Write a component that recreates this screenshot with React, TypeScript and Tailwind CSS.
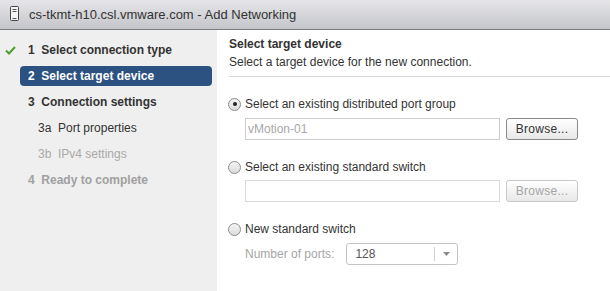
export default function App() {
  const steps = [
    { label: "1  Select connection type", state: "done", indent: false },
    { label: "2  Select target device", state: "active", indent: false },
    { label: "3  Connection settings", state: "normal", indent: false },
    { label: "3a  Port properties", state: "sub", indent: true },
    { label: "3b  IPv4 settings", state: "subDisabled", indent: true },
    { label: "4  Ready to complete", state: "disabled", indent: false },
  ];

  const font = { fontFamily: '"Liberation Sans", Arial, sans-serif' };

  return (
    <div className="w-[610px] h-[291px] overflow-hidden bg-white text-[12px] text-[#333]" style={font}>
      {/* Title bar */}
      <div className="h-[30px] flex items-center gap-[10px] pl-[10px] bg-gradient-to-b from-[#e6e6e9] to-[#c4c5ca] border-b border-[#7c7c7c]">
        <svg width="9" height="16" viewBox="0 0 9 16" className="mb-[1px]">
          <rect x="0.5" y="0.5" width="8" height="14" rx="1" fill="#f4f4f4" stroke="#444" />
          <line x1="2.5" y1="3.5" x2="6.5" y2="3.5" stroke="#555" />
          <line x1="2.5" y1="5.5" x2="6.5" y2="5.5" stroke="#555" />
          <line x1="2.5" y1="12.5" x2="6.5" y2="12.5" stroke="#555" />
        </svg>
        <span className="text-[13px] text-[#333] leading-none">cs-tkmt-h10.csl.vmware.com - Add Networking</span>
      </div>

      <div className="flex h-[261px]">
        {/* Left nav */}
        <div className="w-[217px] bg-[#efefef] pt-[10px] flex flex-col gap-[6px]">
          {steps.map((s, i) => (
            <div key={i} className="flex items-center h-[20px]">
              <div className="w-[20px] flex justify-center pl-[1px]">
                {s.state === "done" && (
                  <svg width="11" height="9" viewBox="0 0 11 9">
                    <path d="M1 4.5 L4 7.5 L10 1" stroke="#4e9d2d" strokeWidth="2" fill="none" />
                  </svg>
                )}
              </div>
              <div
                className={
                  "w-[192px] h-[20px] flex items-center rounded-[4px] whitespace-pre leading-none " +
                  (s.indent ? "pl-[18px] " : "pl-[8px] ") +
                  (s.state === "active"
                    ? "bg-[#2c5281] text-white font-bold"
                    : s.state === "done" || s.state === "normal"
                    ? "text-[#333] font-bold"
                    : s.state === "sub"
                    ? "text-[#333]"
                    : s.state === "subDisabled"
                    ? "text-[#a9a9a9]"
                    : "text-[#a0a0a0] font-bold")
                }
              >
                {s.label}
              </div>
            </div>
          ))}
        </div>

        {/* Right content */}
        <div className="flex-1 pl-[12px] pt-[7px]">
          <div className="font-bold leading-[14px]">Select target device</div>
          <div className="leading-[14px] mt-[4px]">Select a target device for the new connection.</div>
          <div className="h-px bg-[#d6d6d6] mt-[7px]" />

          <div className="flex flex-col mt-[20px]">
            <Radio checked label="Select an existing distributed port group" />
            <div className="flex gap-[6px] ml-[16px] mt-[7px]">
              <div className="w-[255px] h-[22px] border border-[#cccccc] flex items-center pl-[2px] text-[#a8a8a8]">
                vMotion-01
              </div>
              <Button label="Browse..." />
            </div>

            <div className="mt-[20px]">
              <Radio label="Select an existing standard switch" />
            </div>
            <div className="flex gap-[6px] ml-[16px] mt-[6px]">
              <div className="w-[255px] h-[22px] border border-[#dadada]" />
              <Button label="Browse..." disabled />
            </div>

            <div className="mt-[20px]">
              <Radio label="New standard switch" />
            </div>
            <div className="flex items-center ml-[16px] mt-[7px] gap-[12px]">
              <span className="text-[#a6a6a6]">Number of ports:</span>
              <div className="w-[112px] h-[22px] border border-[#c4c4c4] rounded-[3px] flex items-center">
                <span className="flex-1 pl-[8px] text-[#555]">128</span>
                <div className="w-px h-[14px] bg-[#d0d0d0]" />
                <div className="w-[22px] flex justify-center">
                  <svg width="7" height="4" viewBox="0 0 7 4">
                    <path d="M0 0 L7 0 L3.5 4 Z" fill="#8a8a8a" />
                  </svg>
                </div>
              </div>
            </div>
          </div>
        </div>
      </div>
    </div>
  );
}

function Radio({ label, checked }: { label: string; checked?: boolean }) {
  return (
    <div className="flex items-center gap-[4px] h-[14px] -ml-[1px]">
      <div className="w-[13px] h-[13px] rounded-full border border-[#8c8c8c] bg-gradient-to-b from-[#f4f4f4] to-[#dcdcdc] flex items-center justify-center">
        {checked && <div className="w-[4px] h-[4px] rounded-full bg-[#222]" />}
      </div>
      <span className="leading-none">{label}</span>
    </div>
  );
}

function Button({ label, disabled }: { label: string; disabled?: boolean }) {
  return (
    <div
      className={
        "w-[72px] h-[22px] rounded-[3px] border flex items-center justify-center tracking-[0.3px] bg-gradient-to-b from-white to-[#e8e8e8] " +
        (disabled ? "border-[#c8c8c8] text-[#a5a5a5]" : "border-[#8a8a8a] text-[#333]")
      }
    >
      {label}
    </div>
  );
}
